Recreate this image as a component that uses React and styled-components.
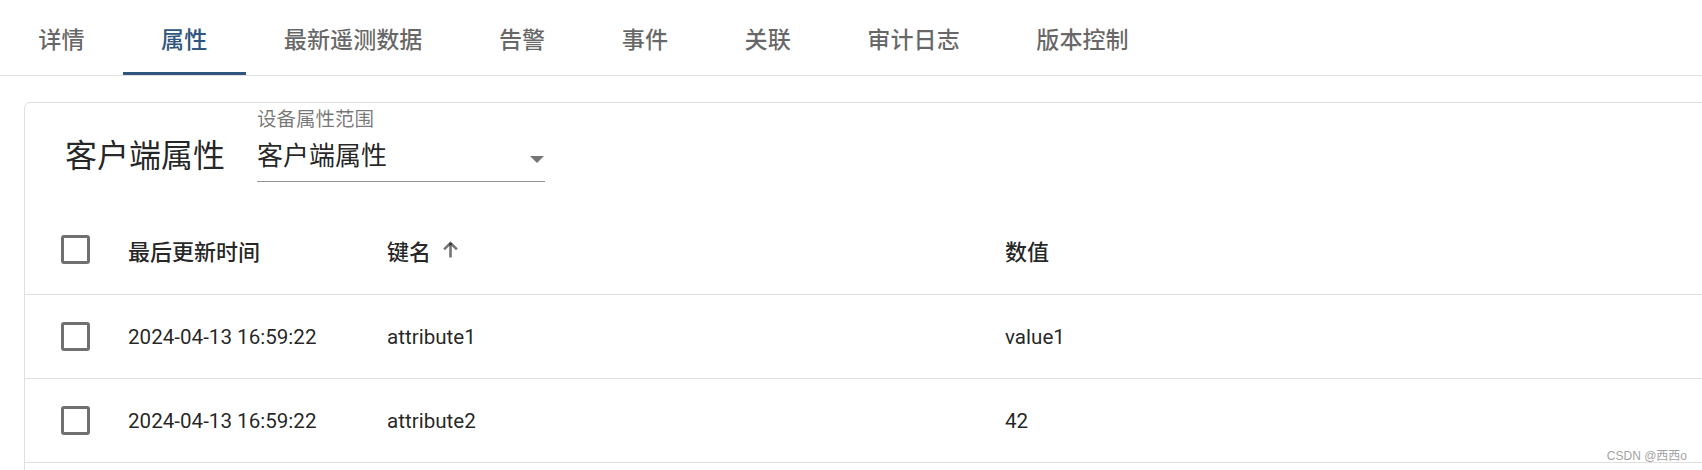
import React from 'react';
import styled, { createGlobalStyle } from 'styled-components';

const GlobalStyle = createGlobalStyle`
  html, body { margin: 0; padding: 0; background: #fff; overflow: hidden; }
  body {
    font-family: Roboto, "Noto Sans CJK SC", "Noto Sans", sans-serif;
    color: rgba(0, 0, 0, 0.87);
  }
  * { box-sizing: border-box; }
`;

const Page = styled.div`
  position: relative;
  width: 1702px;
  height: 470px;
  overflow: hidden;
`;

const TabBar = styled.nav`
  display: flex;
  height: 76px;
  border-bottom: 1px solid #e0e0e0;
`;

const Tab = styled.div`
  position: relative;
  display: flex;
  align-items: center;
  height: 100%;
  padding: 0 38.3px;
  font-family: "Noto Sans CJK SC", sans-serif;
  font-size: 23.1px;
  font-weight: 500;
  color: ${(p) => (p.$active ? '#305680' : 'rgba(0, 0, 0, 0.6)')};
  white-space: nowrap;
  &::after {
    content: '';
    position: absolute;
    left: 0;
    right: 0;
    bottom: 0;
    height: 3px;
    background: ${(p) => (p.$active ? '#305680' : 'transparent')};
  }
`;

const Card = styled.section`
  min-height: 480px;
  margin: 26px -40px 0 24px;
  border: 1px solid #e0e0e0;
  border-radius: 6px;
  background: #fff;
`;

const Toolbar = styled.div`
  display: flex;
  align-items: center;
  height: 102px;
  padding-left: 40px;
`;

const Title = styled.h2`
  margin: 4px 0 0;
  font-size: 32px;
  line-height: 40px;
  font-weight: 400;
  color: rgba(0, 0, 0, 0.87);
`;

const SelectField = styled.div`
  align-self: flex-start;
  margin: 6px 0 0 32px;
  width: 288px;
`;

const SelectLabel = styled.div`
  font-size: 19.5px;
  line-height: 22px;
  color: rgba(0, 0, 0, 0.54);
`;

const SelectValueRow = styled.div`
  display: flex;
  align-items: flex-start;
  margin-top: 10px;
  padding-bottom: 10px;
  border-bottom: 1px solid rgba(0, 0, 0, 0.42);
`;

const SelectValue = styled.div`
  flex: 1;
  font-size: 26px;
  line-height: 30px;
  color: rgba(0, 0, 0, 0.87);
`;

const SelectArrow = styled.span`
  width: 0;
  height: 0;
  margin: 15px 1px 0 0;
  border-left: 7px solid transparent;
  border-right: 7px solid transparent;
  border-top: 7px solid rgba(0, 0, 0, 0.54);
`;

const Row = styled.div`
  display: grid;
  grid-template-columns: 103px 259px 618px 1fr;
  align-items: center;
  height: ${(p) => (p.$header ? '90px' : '84px')};
  border-bottom: 1px solid #e0e0e0;
`;

const HeadCell = styled.div`
  display: flex;
  align-items: center;
  font-family: "Noto Sans CJK SC", sans-serif;
  font-size: 22px;
  font-weight: 500;
  color: rgba(0, 0, 0, 0.87);
  white-space: nowrap;
`;

const Cell = styled.div`
  font-family: Roboto, "Noto Sans CJK SC", sans-serif;
  font-size: 20.6px;
  color: rgba(0, 0, 0, 0.87);
  white-space: nowrap;
`;

const CheckCell = styled.div`
  display: flex;
  align-items: center;
  padding-left: 36px;
`;

const CheckBox = styled.span`
  display: block;
  width: 29px;
  height: 29px;
  border: 3px solid rgba(0, 0, 0, 0.56);
  border-radius: 3px;
`;

const SortIcon = styled.svg`
  width: 17px;
  height: 17px;
  margin-left: 11px;
  fill: none;
  stroke: rgba(0, 0, 0, 0.54);
  stroke-width: 2.6;
`;

const Watermark = styled.div`
  position: absolute;
  right: 15px;
  top: 449px;
  font-family: "Liberation Sans", "Noto Sans CJK SC", sans-serif;
  font-size: 12px;
  line-height: 14px;
  color: #a3a3a3;
`;

const tabs = ['详情', '属性', '最新遥测数据', '告警', '事件', '关联', '审计日志', '版本控制'];

const rows = [
  { time: '2024-04-13 16:59:22', key: 'attribute1', value: 'value1' },
  { time: '2024-04-13 16:59:22', key: 'attribute2', value: '42' },
];

export default function App() {
  return (
    <Page>
      <GlobalStyle />
      <TabBar>
        {tabs.map((t) => (
          <Tab key={t} $active={t === '属性'}>{t}</Tab>
        ))}
      </TabBar>
      <Card>
        <Toolbar>
          <Title>客户端属性</Title>
          <SelectField>
            <SelectLabel>设备属性范围</SelectLabel>
            <SelectValueRow>
              <SelectValue>客户端属性</SelectValue>
              <SelectArrow />
            </SelectValueRow>
          </SelectField>
        </Toolbar>
        <Row $header>
          <CheckCell><CheckBox /></CheckCell>
          <HeadCell>最后更新时间</HeadCell>
          <HeadCell>
            键名
            <SortIcon viewBox="0 0 16 17">
              <path d="M8 16.5V2" />
              <path d="M1.6 8.4L8 2l6.4 6.4" />
            </SortIcon>
          </HeadCell>
          <HeadCell>数值</HeadCell>
        </Row>
        {rows.map((r) => (
          <Row key={r.key}>
            <CheckCell><CheckBox /></CheckCell>
            <Cell>{r.time}</Cell>
            <Cell>{r.key}</Cell>
            <Cell>{r.value}</Cell>
          </Row>
        ))}
      </Card>
      <Watermark>CSDN @西西o</Watermark>
    </Page>
  );
}
